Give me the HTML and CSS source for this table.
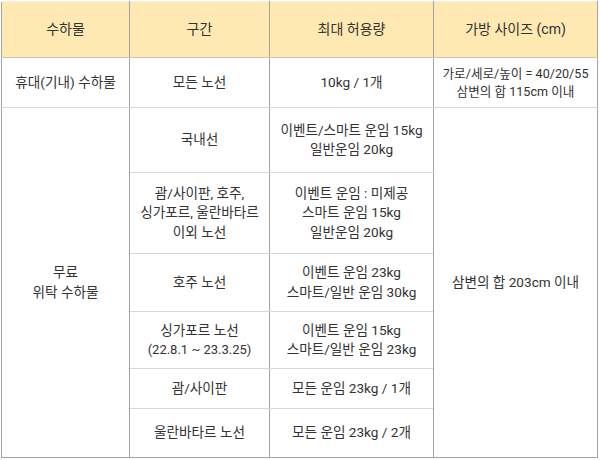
FILE: index.html
```html
<!DOCTYPE html>
<html lang="ko">
<head>
<meta charset="utf-8">
<link rel="stylesheet" href="styles.css">
</head>
<body>
<table class="bag">
  <colgroup>
    <col class="c1"><col class="c2"><col class="c3"><col class="c4">
  </colgroup>
  <thead>
    <tr class="h">
      <th>수하물</th><th>구간</th><th>최대 허용량</th><th>가방 사이즈 (cm)</th>
    </tr>
  </thead>
  <tbody>
    <tr class="r1">
      <td>휴대(기내) 수하물</td>
      <td>모든 노선</td>
      <td>10kg / 1개</td>
      <td class="sm">가로/세로/높이 = 40/20/55<br>삼변의 합 115cm 이내</td>
    </tr>
    <tr class="r2">
      <td rowspan="6">무료<br>위탁 수하물</td>
      <td>국내선</td>
      <td>이벤트/스마트 운임 15kg<br>일반운임 20kg</td>
      <td rowspan="6">삼변의 합 203cm 이내</td>
    </tr>
    <tr class="r3">
      <td>괌/사이판, 호주,<br>싱가포르, 울란바타르<br>이외 노선</td>
      <td>이벤트 운임 : 미제공<br>스마트 운임 15kg<br>일반운임 20kg</td>
    </tr>
    <tr class="r4">
      <td>호주 노선</td>
      <td>이벤트 운임 23kg<br>스마트/일반 운임 30kg</td>
    </tr>
    <tr class="r5">
      <td>싱가포르 노선<br><span class="date">(22.8.1 ~ 23.3.25)</span></td>
      <td>이벤트 운임 15kg<br>스마트/일반 운임 23kg</td>
    </tr>
    <tr class="r6">
      <td>괌/사이판</td>
      <td>모든 운임 23kg / 1개</td>
    </tr>
    <tr class="r7">
      <td>울란바타르 노선</td>
      <td>모든 운임 23kg / 2개</td>
    </tr>
  </tbody>
</table>
</body>
</html>
```
FILE: styles.css
```css
html, body {
  margin: 0;
  padding: 0;
  background: #ffffff;
}
body {
  padding: 1px 0 0 1px;
  font-family: Roboto, "Noto Sans CJK KR", sans-serif;
  color: #333333;
}
.bag {
  border-collapse: collapse;
  table-layout: fixed;
  width: 596px;
  font-size: 13.6px;
  line-height: 19.5px;
}
.c1 { width: 128px; }
.c2 { width: 140px; }
.c3 { width: 164px; }
.c4 { width: 164px; }
.bag th, .bag td {
  padding: 0 2px;
  text-align: center;
  vertical-align: middle;
  border-left: 1px solid #a3a3a3;
  border-right: 1px solid #a3a3a3;
  border-top: 1px solid #d6d6d6;
  border-bottom: 1px solid #d6d6d6;
  font-weight: normal;
}
.bag th {
  background: #fee9b2;
  font-size: 14px;
  border-top-color: #f2efe6;
  border-bottom-color: #cfc6ae;
}
.h { height: 56px; }
.r1 { height: 50px; }
.r2 { height: 65px; }
.r3 { height: 81px; }
.r4 { height: 58px; }
.r5 { height: 57px; }
.r6 { height: 40px; }
.r7 { height: 49px; }
.bag tbody tr:last-child td, .bag td[rowspan] {
  border-bottom-color: #a3a3a3;
}
.sm {
  font-size: 12.6px;
  line-height: 18px;
}
.date {
  font-size: 13px;
}
```
